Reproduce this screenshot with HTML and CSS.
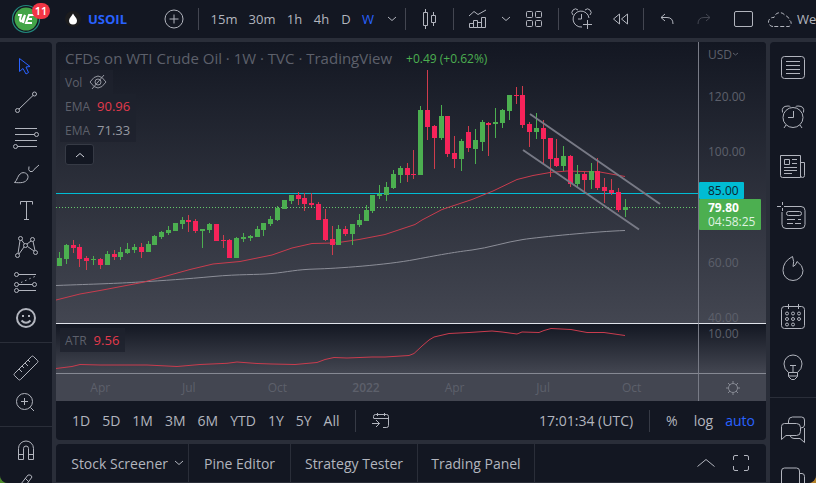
FILE: index.html
```html
<!DOCTYPE html>
<html lang="en">
<head>
    <meta charset="utf-8">
    <title>USOIL 79.80</title>
    <link rel="stylesheet" href="styles.css">
</head>
<body>
<div class="app">
    <!-- Top toolbar -->
    <header class="topbar">
        <button class="avatar" aria-label="Account">
            <svg width="30" height="30" viewBox="0 0 30 30"><circle cx="15" cy="15" r="13.5" fill="#131722" stroke="#22877b" stroke-width="1.2"/><circle cx="15" cy="15" r="11.5" fill="#43a548" stroke="none"/><path d="M7 11h3l-1 4q0 3 2 2l3-6-2 8M23 11h-5l-3 8h6M17 15h4" fill="none" stroke="#fff" stroke-width="2"/></svg>
            <span class="badge">11</span>
        </button>
        <button class="symbol">
            <svg width="16" height="16" viewBox="0 0 16 16"><g stroke="none"><circle cx="8" cy="8" r="8" fill="#1c1c1e"/><path d="M8 2.500C7 5 4 7 4 9.500a4 4 0 0 0 8 0C12 7 9 5 8 2.500z" fill="#fff"/></g></svg>
            USOIL
        </button>
        <button aria-label="Compare"><svg width="20" height="20" viewBox="0 0 20 20"><circle cx="10" cy="10" r="9"/><path d="M10 5.500v9M5.500 10h9"/></svg></button>
        <i class="sep"></i>
        <button class="first">15m</button>
        <button>30m</button>
        <button>1h</button>
        <button>4h</button>
        <button>D</button>
        <button class="active">W</button>
        <button aria-label="Intervals"><svg width="10" height="6" viewBox="0 0 10 6"><path d="M1 1l4 3.500L9 1"/></svg></button>
        <i class="sep"></i>
        <button aria-label="Candles"><svg width="16" height="20" viewBox="0 0 16 20"><path d="M3.500 0v3M3.500 17v3M1.500 3.500h4v13h-4zM11.500 3v3M11.500 14v3M9.500 6.500h4v7h-4z"/></svg></button>
        <i class="sep"></i>
        <button aria-label="Indicators"><svg width="20" height="20" viewBox="0 0 20 20"><path d="M1 7l5-4.500 4 3L18 1M1.500 14.500h4v4h-4zM5.500 11.500h4v7h-4zM9.500 13.500h4v5h-4zM13.500 8.500h4v10h-4z"/></svg></button>
        <button aria-label="Favorites"><svg width="10" height="6" viewBox="0 0 10 6"><path d="M1 1l4 3.500L9 1"/></svg></button>
        <button aria-label="Templates"><svg width="18" height="18" viewBox="0 0 18 18"><rect x="1.500" y="1.500" width="6" height="6" rx="1"/><rect x="10.500" y="1.500" width="6" height="6" rx="1"/><rect x="1.500" y="10.500" width="6" height="6" rx="1"/><rect x="10.500" y="10.500" width="6" height="6" rx="1"/></svg></button>
        <i class="sep"></i>
        <button aria-label="Alert"><svg width="22" height="22" viewBox="0 0 22 22"><path d="M18 10a8 8 0 1 0-7 9M10.500 6v5H7M2 7a3.500 3.500 0 0 1 5-5M14 2a3.500 3.500 0 0 1 5 5M16.500 12v9M12 16.500h9"/></svg></button>
        <button class="replay" aria-label="Replay"><svg width="18" height="14" viewBox="0 0 18 14"><path d="M7.500 2v10l-6-5zM15.500 2v10l-6-5z"/></svg></button>
        <i class="sep"></i>
        <button aria-label="Undo"><svg width="16" height="12" viewBox="0 0 16 12"><path d="M6 1L2 4.500 6 8M2 4.500h6q6 0 6 6.500"/></svg></button>
        <button class="off" aria-label="Redo"><svg width="16" height="12" viewBox="0 0 16 12"><path d="M10 1l4 3.500L10 8M14 4.500H8q-6 0-6 6.500"/></svg></button>
        <button aria-label="Layout"><svg width="20" height="18" viewBox="0 0 20 18"><rect x="1.500" y="1.500" width="18" height="15" rx="1.500"/></svg></button>
        <button class="save"><svg width="26" height="18" viewBox="0 0 26 18"><path d="M6 16.500a4.500 4.500 0 0 1 0-9h1a6 6 0 0 1 11-2q4 1 4 4.500a3.500 3.500 0 0 1 0 6.500z" stroke-dasharray="4 2"/></svg>Weekly</button>
    </header>

    <!-- Drawing tools -->
    <nav class="tools">
        <button class="active" aria-label="Cursor"><svg width="28" height="28" viewBox="0 0 28 28"><path d="M7.500 5.500v13l3.500-3 3 5.500 2.500-1.500-2.500-5.500 4-.5z"/></svg></button>
        <button aria-label="Trend line"><svg width="28" height="28" viewBox="0 0 28 28"><circle cx="5.500" cy="21.500" r="2"/><circle cx="22.500" cy="5" r="2"/><path d="M7 20L21 6.500"/></svg></button>
        <button aria-label="Fib retracement"><svg width="28" height="28" viewBox="0 0 28 28"><path d="M3 3.500h22M3 9.500h19.500M3 15.500h22M5.500 21.500H25"/><circle cx="24.500" cy="9.500" r="2"/><circle cx="3.500" cy="21.500" r="2"/></svg></button>
        <button aria-label="Brush"><svg width="28" height="28" viewBox="0 0 28 28"><path d="M2.500 21.500c3-2 3-8 7-9.500s8 2 6 6-7 4-13 3.500zM17 5.500q-1 4 1 5 3 1 4-2l5-4.500"/></svg></button>
        <button aria-label="Text"><svg width="28" height="28" viewBox="0 0 28 28"><path d="M8.500 7.500v-3h12v3M14.500 4.500v18M12 22.500h5"/></svg></button>
        <button aria-label="Patterns"><svg width="28" height="28" viewBox="0 0 28 28"><circle cx="5.500" cy="22.500" r="2"/><circle cx="8.500" cy="5.500" r="2"/><circle cx="13.500" cy="12.500" r="2"/><circle cx="20.500" cy="6.500" r="2"/><circle cx="23.500" cy="19.500" r="2"/><path d="M6 20.500L8 7.500M9.500 7l3 4M7 21l5-7M15 11l4-3M15.500 13.500l6.500 4.500M21 8.500l2 9"/></svg></button>
        <button aria-label="Forecast"><svg width="28" height="28" viewBox="0 0 28 28"><circle cx="4.500" cy="5.500" r="2"/><circle cx="4.500" cy="15.500" r="2"/><circle cx="22.500" cy="15.500" r="2"/><circle cx="4.500" cy="21.500" r="2"/><path d="M6.500 5.500H24M6.500 15.500h14M6.500 21.500H24"/><path d="M9 13.500L24 7" stroke-dasharray="1.500 3"/></svg></button>
        <button aria-label="Icons"><svg class="bold" width="28" height="28" viewBox="0 0 28 28"><circle cx="14" cy="13" r="9"/><path d="M9.500 15.500q4.500 4.500 9 0M11 10v2M17 10v2"/></svg></button>
        <hr>
        <button aria-label="Measure"><svg width="28" height="28" viewBox="0 0 28 28"><path d="M2.500 20.500l17-17q1-1 2 0l4 4q1 1 0 2l-17 17q-1 1-2 0l-4-4q-1-1 0-2zM7 16l3 3M10 13l2 2M13 10l3 3M16 7l2 2"/></svg></button>
        <button aria-label="Zoom in"><svg width="28" height="28" viewBox="0 0 28 28"><circle cx="12.500" cy="12.500" r="8"/><path d="M12.500 9v7M9 12.500h7M18.500 18.500L22 22"/></svg></button>
        <hr>
        <button aria-label="Magnet"><svg width="28" height="28" viewBox="0 0 28 28"><path d="M6.500 22.500v-11a7.500 7.500 0 0 1 15 0v11h-5v-11a2.500 2.500 0 0 0-5 0v11zM6.500 17.500h5M16.500 17.500h5"/></svg></button>
        <button aria-label="Lock drawings"><svg width="28" height="28" viewBox="0 0 28 28"><path d="M5 16L16 2q3-1 4 2L9 19l-4 1zM13 5l4 4M9 12h12v12"/></svg></button>
    </nav>

    <main class="center">
        <section class="chart-box">
            <div class="chart">
                <div class="pane">
                    <svg class="plot" id="plot" viewBox="0 42 642 281" preserveAspectRatio="none">
                        <rect class="price-line" y="193" width="642" height="1"/>
                        <path d="M0 207.500h642" stroke="#66c96b" stroke-dasharray="1 2"/>
                        <path d="M0 285.500C40 284 60 283.500 84 282S130 279 157 276.500 200 275 216 273.500 240 269.500 260 269 330 265 359 259.500 400 252 416 250 450 242 467 239.500 540 231.500 569 230.500" stroke="#8c8e98"/>
                        <path d="M0 300L24 294 44 290.500 86 282.500 114 275 134 269.500 157 264 184 261.500 216 255 236 248 256 243.500 279 243 303 239.500 329 234.500 359 224.500 366 220 386 209.500 416 199.500 437 191 461 179.500 477 175.500 494 172.500 511 171 544 172 569 176.500" stroke="#c93c4e"/>
                        <g id="candles"></g>
                        <path d="M474 114L604 204M467 150L583 229.500" stroke="#777985" stroke-width="2"/>
                    </svg>
                    <div class="legend">
                        <h1>CFDs on WTI Crude Oil · 1W · TVC · TradingView <span class="up">+0.49 (+0.62%)</span></h1>
                        <div class="row">Vol <svg width="18" height="16" viewBox="0 0 18 16"><path d="M1 8q8-12 16 0-8 12-16 0z"/><circle cx="9" cy="8" r="3"/><path d="M3 15L15 1"/></svg></div>
                        <div class="row">EMA <b class="red">90.96</b></div>
                        <div class="row">EMA <b>71.33</b></div>
                        <button class="collapse" aria-label="Collapse"><svg width="10" height="6" viewBox="0 0 10 6"><path d="M1 5l4-3.500L9 5"/></svg></button>
                    </div>
                </div>
                <div class="pane axis">
                    <svg class="scale" width="67" height="281">
                        <text x="9" y="17">USD</text><path d="M34 11l2.500 2 2.500-2"/>
                        <text x="9" y="59">120.00</text>
                        <text x="9" y="114">100.00</text>
                        <text x="9" y="225">60.00</text>
                        <text x="9" y="280">40.00</text>
                        <rect y="140" width="45" height="17" rx="1" fill="#00bcd4"/>
                        <text class="dark" x="9" y="153">85.00</text>
                        <rect y="157" width="62" height="31" rx="1" fill="#4caf50"/>
                        <text class="last" x="9" y="170">79.80</text>
                        <text class="time" x="9" y="184">04:58:25</text>
                    </svg>
                </div>
                <div class="pane atr">
                    <svg class="plot" viewBox="0 324 642 49" preserveAspectRatio="none">
                        <path d="M0 368.500l16-2 8-2 20 .5h47l30 1.500 23-2 27-1.200 10-1.300 20 1.500 15 .5 23 .5 22-2 8-3 9-2 13 .5 25-1h13l24-1.500 5-2 8-7.500 7-6 5-3 15-3.500 20-1 23-1.500 10 1 15 2 5-2 17 .5 5-2 7-2 20 1 16 3h17l21 3" stroke="#c93c4e"/>
                    </svg>
                    <div class="legend"><div class="row">ATR <b class="red">9.56</b></div></div>
                </div>
                <div class="pane atr axis"><svg class="scale" width="67" height="49"><text x="9" y="14">10.00</text></svg></div>
                <div class="dates">
                    <span>Apr</span><span>Jul</span><span>Oct</span><strong>2022</strong><span>Apr</span><span>Jul</span><span>Oct</span>
                </div>
                <button class="dates-settings axis" aria-label="Axis settings"><svg width="16" height="16" viewBox="0 0 16 16"><circle cx="8" cy="8" r="4.500"/><path d="M8 1v2.500M8 12.500V15M1 8h2.500M12.500 8H15M3 3l2 2M11 11l2 2M13 3l-2 2M5 11l-2 2"/></svg></button>
            </div>
            <div class="range-bar">
                <button>1D</button><button>5D</button><button>1M</button><button>3M</button><button>6M</button><button>YTD</button><button>1Y</button><button>5Y</button><button>All</button>
                <i class="sep"></i>
                <button aria-label="Go to date"><svg width="18" height="18" viewBox="0 0 18 18"><path d="M1.500 6V4.500q0-2 2-2h11q2 0 2 2v9q0 2-2 2H11M1.500 6.500h15M5.500 1v3M12.500 1v3M0 11.500h7.500M4 8l3.500 3.500L4 15"/></svg></button>
                <button class="clock">17:01:34 (UTC)</button>
                <i class="sep"></i>
                <button class="percent">%</button><button>log</button><button class="active">auto</button>
            </div>
        </section>
        <footer class="tabs">
            <button class="screener">Stock Screener <svg width="10" height="6" viewBox="0 0 10 6"><path d="M1 1l4 3.500L9 1"/></svg></button>
            <button>Pine Editor</button>
            <button>Strategy Tester</button>
            <button>Trading Panel</button>
            <div class="tab-actions">
                <button aria-label="Open panel"><svg width="20" height="10" viewBox="0 0 20 10"><path d="M1.500 8.500L10 1.500l8.500 7"/></svg></button>
                <button aria-label="Maximize"><svg width="18" height="18" viewBox="0 0 18 18"><path d="M1.500 6V3q0-1.500 1.500-1.500h3M12 1.500h3q1.500 0 1.500 1.500v3M16.500 12v3q0 1.500-1.500 1.500h-3M6 16.500H3Q1.500 16.500 1.500 15v-3"/></svg></button>
            </div>
        </footer>
    </main>

    <!-- Widgets -->
    <aside class="widgets">
        <button aria-label="Watchlist"><svg width="26" height="26" viewBox="0 0 26 26"><rect x="1.500" y="2.500" width="23" height="22" rx="3"/><path d="M6 7.500h14M6 11.500h14M6 15.500h14M6 19.500h14"/></svg></button>
        <button aria-label="Alerts"><svg width="26" height="26" viewBox="0 0 26 26"><circle cx="13" cy="13.500" r="10"/><path d="M13.500 7v6.500H8M2.500 8.500Q1 2 8 2q2 0 2.500 1M23.500 8.500Q25 2 18 2q-2 0-2.500 1M6 21l-2 3M20 21l2 3"/></svg></button>
        <button aria-label="News"><svg width="28" height="26" viewBox="0 0 28 26"><path d="M21.500 23.500h-18q-2 0-2-2v-20h20zM21.500 8.500h4v13q0 2-2 2t-2-2M5.500 5.500h5v5h-5zM13 5.500h5M13 9.500h5M5 13.500h13M5 16.500h13M5 19.500h8"/></svg></button>
        <button aria-label="Data window"><svg width="36" height="30" viewBox="0 0 36 30"><path d="M12 4.500h14q4 0 4 4v14q0 4-4 4H11q-4 0-4-4V10M7.500 0v3M7.500 6v3M2 4.500h4M9 4.500h3M12 17.500h8M23 17.500h3M12 21.500h6M20 21.500h6"/><rect x="11.500" y="9.500" width="15" height="4" rx="2"/></svg></button>
        <button aria-label="Hotlists"><svg width="26" height="28" viewBox="0 0 26 28"><path d="M12.500 3.500q2 5 .5 10 3-1 4-5 6 4 6 9a10 10 0 0 1-20 0q0-9 9.500-14z"/></svg></button>
        <button aria-label="Calendar"><svg width="26" height="28" viewBox="0 0 26 28"><rect x="1.500" y="3.500" width="23" height="22" rx="3"/><path d="M8.500 1v5M18.500 1v5"/><circle cx="7" cy="10.500" r="1.500"/><circle cx="13" cy="10.500" r="1.500"/><circle cx="19" cy="10.500" r="1.500"/><circle cx="7" cy="16" r="1.500"/><circle cx="13" cy="16" r="1.500"/><circle cx="19" cy="16" r="1.500"/><circle cx="7" cy="21.500" r="1.500"/><circle cx="13" cy="21.500" r="1.500"/></svg></button>
        <button aria-label="Ideas"><svg width="26" height="28" viewBox="0 0 26 28"><path d="M8.500 19.500Q4 16 4 11a9 9 0 0 1 18 0q0 5-4.500 8.500v4l-3 3h-3l-3-3zM8.500 19.500h9M8.500 23h9M10 12.500h6M13 12.500v7"/></svg></button>
        <hr>
        <button aria-label="Chats"><svg width="26" height="28" viewBox="0 0 26 28"><path d="M1.500 24.500v-13q0-3 3-3h12q4 0 4 4v4q0 4-4 4H6zM8.500 8.500V6q0-4 4-4h9q3 0 3 3v5q0 3-4 3M10 20.500q1 3 4 3h6l4.500 4V13"/></svg></button>
        <button aria-label="Private chats"><svg width="26" height="28" viewBox="0 0 26 28"><path d="M1.500 27V6q0-3 3-3h12q3 0 3 3v12q0 2-3 2H6M20 8.500h2q2.500 0 2.500 3V27"/></svg></button>
    </aside>
</div>

<script>
    // one row per weekly candle: direction, high, body top, body bottom, low
    const candles = [
        ['g',252,258,266,266], ['g',244,245,259,264], ['r',240,245,248,253], ['r',244,247,259,267],
        ['r',256,258,261,270], ['g',256,259,260,265], ['r',258,259,265,269], ['g',251,254,265,265],
        ['r',250,254,257,260], ['g',247,252,257,260], ['g',243,249,253,254], ['g',244,247,250,253],
        ['r',243,247,252,258], ['g',241,244,252,252], ['g',235,236,245,245], ['g',231,232,237,239],
        ['g',226,230,233,235], ['g',223,223,231,231], ['g',217,220,224,229], ['r',215,220,222,232],
        ['r',219,221,231,233], ['g',229,229,231,248], ['g',223,224,230,233], ['r',224,224,241,241],
        ['r',235,240,241,248], ['r',239,240,258,258], ['g',237,238,258,258], ['g',233,237,239,242],
        ['g',235,236,238,241], ['g',226,229,237,237], ['g',223,223,230,236], ['g',216,219,224,226],
        ['g',206,208,220,221], ['g',200,200,209,209], ['g',195,195,201,204], ['r',192,195,199,205],
        ['r',193,198,204,211], ['r',193,203,205,207], ['r',202,204,220,220], ['r',209,219,240,241],
        ['r',226,239,245,255], ['g',225,229,245,245], ['r',226,229,234,236], ['g',224,224,234,245],
        ['g',214,220,225,227], ['g',205,210,221,221], ['g',195,195,211,213], ['g',185,194,196,199],
        ['g',182,187,195,201], ['g',170,174,188,189], ['g',166,168,175,183], ['r',163,168,175,182],
        ['r',150,174,175,179], ['g',106,110,175,175], ['r',70,110,127,140], ['r',125,126,138,169],
        ['g',105,116,138,140], ['r',116,116,154,157], ['r',136,153,159,168], ['g',139,141,159,171],
        ['r',126,132,148,152], ['g',129,140,149,164], ['g',120,122,142,151], ['r',122,123,125,156],
        ['g',108,122,124,138], ['g',109,110,123,128], ['g',95,95,111,120], ['r',87,95,96,104],
        ['r',86,95,125,128], ['r',122,124,132,147], ['g',113,128,132,139], ['r',120,128,139,164],
        ['r',138,138,159,177], ['r',139,158,166,167], ['g',146,156,166,171], ['r',155,156,184,187],
        ['g',165,174,184,187], ['r',172,174,180,192], ['g',163,171,180,189], ['r',158,171,188,190],
        ['r',178,187,191,203], ['r',179,190,193,195], ['r',188,192,210,212], ['g',199,207,210,217]
    ];

    let out = '';
    candles.forEach(([dir, high, top, bottom, low], i) => {
        const x = Math.round(1 + i * 6.815);
        out += `<rect class="wick ${dir}" x="${x + 2}" y="${high}" width="1" height="${low - high}"/>`;
        out += `<rect class="${dir}" x="${x}" y="${top}" width="5" height="${bottom - top}"/>`;
    });
    document.getElementById('candles').innerHTML = out;
</script>
</body>
</html>
```
FILE: styles.css
```css
* { box-sizing: border-box; }
body { margin: 0; background: linear-gradient(90deg, #4d8a2c 50%, #b5822b 50%); font: 14px "Trebuchet MS", "Open Sans", sans-serif; color: #b2b5be; }
button { display: flex; align-items: center; justify-content: center; padding: 0; border: 0; background: none; color: inherit; font: inherit; white-space: nowrap; cursor: pointer; }
svg { flex: none; fill: none; stroke: currentColor; }
.active { color: #2962ff; }
.sep { width: 1px; height: 22px; background: #434651; }

.app { display: grid; grid-template: 38px minmax(0, 1fr) / 52px minmax(0, 1fr) 46px; gap: 4px; height: 100vh; background: #2a2e39; border-radius: 0 0 8px 8px; overflow: hidden; }

/* top toolbar */
.topbar { grid-column: 1 / -1; display: grid; grid-template-columns: 52px 98px 48px 1px 44px 38px 27px 27px 22px 22px 26px 1px 47px 1px 48px 8px 48px 1px 46px 38px 1px 46px 28px 49px 1fr; align-items: center; background: #131722; overflow: hidden; font-size: 13px; }
.avatar { position: relative; }
.badge { position: absolute; top: -1px; right: 2px; width: 18px; height: 16px; border-radius: 8px; background: #f23645; color: #fff; font-size: 11px; font-weight: 600; line-height: 16px; }
.symbol { justify-content: flex-start; gap: 7px; padding-left: 13px; color: #2962ff; font-weight: 700; }
.first { padding-left: 6px; }
.replay { padding-right: 6px; }
.off { color: #434651; }
.save { justify-content: flex-start; gap: 4px; }

/* side bars */
.tools, .widgets { display: flex; flex-direction: column; background: #131722; overflow: hidden; }
.tools { padding-top: 7px; border-radius: 0 4px 0 0; }
.tools button { flex: none; height: 36px; }
.widgets { border-radius: 4px 0 0 0; }
.widgets button { flex: none; height: 50px; }
hr { flex: none; width: 100%; height: 1px; margin: 5px 0 6px; border: 0; background: #2a2e39; }
.bold { stroke-width: 2; }

/* chart */
.center { display: flex; flex-direction: column; gap: 4px; min-height: 0; padding-bottom: 1px; }
.chart-box { flex: 1; display: flex; flex-direction: column; min-height: 0; border-radius: 4px; overflow: hidden; background: #131722; }
.chart { flex: 1; display: grid; grid-template: minmax(0, 1fr) 50px 28px / minmax(0, 1fr) 68px; min-height: 0; }
.pane { position: relative; min-height: 0; background: linear-gradient(#131722, #434651); overflow: hidden; }
.atr { border-top: 1px solid #e0e3eb; }
.plot { display: block; width: 100%; height: 100%; }
.axis { border-left: 1px solid #787b86; }
.price-line { fill: #00bcd4; stroke: none; }
.g { fill: #4caf50; stroke: none; }
.r { fill: #f7235a; stroke: none; }
.wick.r { fill: #cf3c4d; }
.scale { display: block; font-size: 12px; stroke: #5d606b; }
.scale rect { stroke: none; }
.scale text { fill: #5d606b; stroke: none; }
.scale .dark { fill: #0c2530; }
.scale .last { fill: #fff; font-weight: 700; }
.scale .time { fill: #dff2e0; }
.dates { display: grid; grid-template-columns: repeat(7, 1fr); align-items: center; padding-right: 22px; border-top: 1px solid #868993; background: #434651; color: #5d606b; font-size: 12px; text-align: center; }
.dates strong { font-weight: 600; }
.dates-settings { border-top: 1px solid #868993; background: #434651; color: #868993; }

.legend { position: absolute; top: 4px; left: 4px; display: flex; flex-direction: column; align-items: flex-start; color: #5d606b; }
.legend h1 { display: flex; align-items: center; gap: 14px; height: 24px; margin: 0; padding-left: 5px; font-size: 15px; font-weight: 400; white-space: nowrap; }
.up { color: #4caf50; font-size: 12px; }
.row { display: flex; align-items: center; gap: 7px; height: 24px; padding: 0 6px 0 5px; background: rgba(30, 34, 45, .8); font-size: 12px; }
.row b { color: #9598a1; font-size: 13px; font-weight: 400; }
.row .red { color: #e23a4c; }
.row svg { color: #9598a1; }
.collapse { width: 29px; height: 21px; margin: 2px 0 0 5px; border: 1px solid #363a45; border-radius: 3px; background: #131722; color: #d1d4dc; }

/* range bar */
.range-bar { display: flex; align-items: center; gap: 12px; height: 39px; padding: 0 11px 0 16px; }
.range-bar .sep { margin: 0 4px; background: #363a45; }
.clock { margin-left: auto; }
.percent { margin-right: 4px; }

/* bottom tabs */
.tabs { display: grid; grid-template-columns: 133px 102px 127px 117px 1fr; height: 38px; border-radius: 4px 4px 0 0; background: #131722; }
.tabs > button { gap: 6px; border-right: 1px solid #2a2e39; }
.tabs .screener { justify-content: flex-end; padding-right: 4px; }
.tab-actions { display: flex; align-items: center; justify-content: flex-end; gap: 16px; padding-right: 16px; }
```
